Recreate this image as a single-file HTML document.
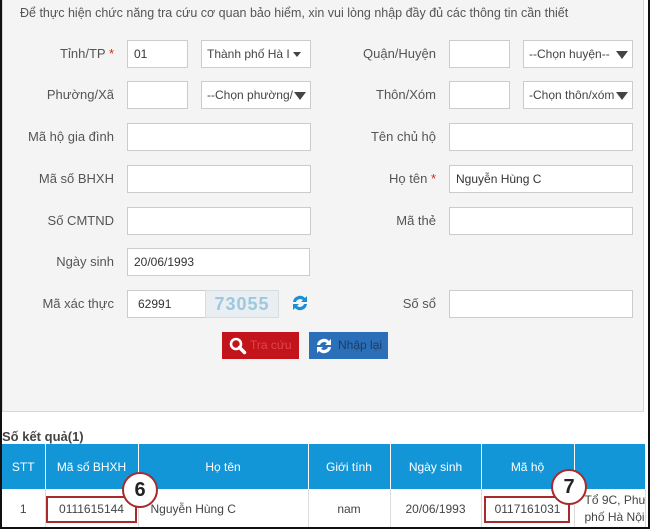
<!DOCTYPE html>
<html><head><meta charset="utf-8"><style>
*{box-sizing:border-box;margin:0;padding:0}
body{width:650px;height:529px;overflow:hidden;background:#fff;font-family:"Liberation Sans",sans-serif;font-size:13px;color:#555;position:relative}
.frame{position:absolute;left:0;top:0;width:650px;height:529px;border:2px solid #111;border-top:none;z-index:10;pointer-events:none}
.panel{position:absolute;left:2px;top:0;width:642px;height:412px;background:#f4f4f4;border:1px solid #d6d6d6;border-top:none}
.a{position:absolute}
.lbl{position:absolute;text-align:right;width:110px;font-size:13px;color:#555;line-height:28px}
.in{position:absolute;background:#fff;border:1px solid #ccc;height:28px;line-height:26px;padding-left:6px;color:#333;font-size:12px}
.sel{position:absolute;background:#fff;border:1px solid #ccc;height:28px;line-height:26px;padding-left:5px;padding-right:18px;color:#444;font-size:12px;white-space:nowrap;overflow:hidden}
.sel .ar{position:absolute;right:4px;top:10px;width:0;height:0;border-left:6px solid transparent;border-right:6px solid transparent;border-top:8px solid #444}
.req{color:#d9261c}
table{position:absolute;left:2px;top:444px;border-collapse:collapse;width:643px;font-size:12px;table-layout:fixed}
th{background:#1396d8;color:#fff;font-weight:normal;height:45px;border-right:1px solid #fff;text-align:center}
td{height:40px;border-right:1px solid #ddd;color:#444;text-align:center;vertical-align:middle;background:#fff}
.box{position:absolute;border:2px solid #a82a2a}
.circ{position:absolute;width:36px;height:36px;border-radius:50%;border:2px solid #a82a2a;background:#fff;font-weight:bold;font-size:20px;color:#222;text-align:center;line-height:32px}
</style></head><body>
<div class="panel"></div>
<div class="a" style="left:20px;top:6px;font-size:12.5px;color:#555">Để thực hiện chức năng tra cứu cơ quan bảo hiểm, xin vui lòng nhập đầy đủ các thông tin cần thiết</div>

<div class="lbl" style="left:4px;top:40px">Tỉnh/TP <span class="req">*</span></div>
<div class="in" style="left:127px;top:40px;width:61px">01</div>
<div class="sel" style="left:201px;top:40px;width:110px;padding-right:4px">Thành phố Hà I <span style="display:inline-block;border-left:4px solid transparent;border-right:4px solid transparent;border-top:5px solid #444;vertical-align:middle"></span></div>
<div class="lbl" style="left:326px;top:40px">Quận/Huyện</div>
<div class="in" style="left:449px;top:40px;width:61px"></div>
<div class="sel" style="left:523px;top:40px;width:110px">--Chọn huyện--<span class="ar"></span></div>

<div class="lbl" style="left:4px;top:81px">Phường/Xã</div>
<div class="in" style="left:127px;top:81px;width:61px"></div>
<div class="sel" style="left:201px;top:81px;width:110px">--Chọn phường/<span class="ar"></span></div>
<div class="lbl" style="left:326px;top:81px">Thôn/Xóm</div>
<div class="in" style="left:449px;top:81px;width:61px"></div>
<div class="sel" style="left:523px;top:81px;width:110px">-Chọn thôn/xóm<span class="ar"></span></div>

<div class="lbl" style="left:4px;top:123px">Mã hộ gia đình</div>
<div class="in" style="left:127px;top:123px;width:184px"></div>
<div class="lbl" style="left:326px;top:123px">Tên chủ hộ</div>
<div class="in" style="left:449px;top:123px;width:184px"></div>

<div class="lbl" style="left:4px;top:165px">Mã số BHXH</div>
<div class="in" style="left:127px;top:165px;width:184px"></div>
<div class="lbl" style="left:326px;top:165px">Họ tên <span class="req">*</span></div>
<div class="in" style="left:449px;top:165px;width:184px">Nguyễn Hùng C</div>

<div class="lbl" style="left:4px;top:207px">Số CMTND</div>
<div class="in" style="left:127px;top:207px;width:184px"></div>
<div class="lbl" style="left:326px;top:207px">Mã thẻ</div>
<div class="in" style="left:449px;top:207px;width:184px"></div>

<div class="lbl" style="left:4px;top:248px">Ngày sinh</div>
<div class="in" style="left:127px;top:248px;width:183px">20/06/1993</div>

<div class="lbl" style="left:4px;top:290px">Mã xác thực</div>
<div class="in" style="left:127px;top:290px;width:79px;padding-left:10px">62991</div>
<div class="a" style="left:205px;top:290px;width:74px;height:28px;background:#e8eef2;border:1px solid #d8dde0;color:#9ec8e0;font-weight:bold;font-size:18px;text-align:center;line-height:26px;letter-spacing:1px">73055</div>
<svg class="a" style="left:290px;top:293px" width="20" height="20" viewBox="0 0 20 20"><path d="M3 9a7 7 0 0 1 12-4l2-2v6h-6l2-2a4.5 4.5 0 0 0-7 2z" fill="#1b8fd6"/><path d="M17 11a7 7 0 0 1-12 4l-2 2v-6h6l-2 2a4.5 4.5 0 0 0 7-2z" fill="#1b8fd6"/></svg>
<div class="lbl" style="left:326px;top:290px">Số sổ</div>
<div class="in" style="left:449px;top:290px;width:184px"></div>

<div class="a" style="left:222px;top:332px;width:77px;height:27px;background:#c2141a;color:#e0464a;line-height:27px;padding-left:28px;font-size:12px;white-space:nowrap">Tra cứu</div>
<svg class="a" style="left:228px;top:336px" width="20" height="20" viewBox="0 0 20 20"><circle cx="8" cy="8" r="5" fill="none" stroke="#fff" stroke-width="2.6"/><path d="M11.5 11.5l5 5" stroke="#fff" stroke-width="3.5" stroke-linecap="round"/></svg>
<div class="a" style="left:309px;top:332px;width:79px;height:27px;background:#2a6fb8;color:#1c3c66;line-height:27px;padding-left:29px;font-size:12px;white-space:nowrap">Nhập lại</div>
<svg class="a" style="left:314px;top:336px" width="20" height="20" viewBox="0 0 20 20"><path d="M3 9a7 7 0 0 1 12-4l2-2v6h-6l2-2a4.5 4.5 0 0 0-7 2z" fill="#fff"/><path d="M17 11a7 7 0 0 1-12 4l-2 2v-6h6l-2 2a4.5 4.5 0 0 0 7-2z" fill="#fff"/></svg>

<div class="a" style="left:2px;top:429px;font-weight:bold;font-size:13px;color:#444">Số kết quả(1)</div>

<table>
<colgroup><col style="width:43px"><col style="width:93px"><col style="width:170px"><col style="width:82px"><col style="width:91px"><col style="width:93px"><col style="width:71px"></colgroup>
<tr><th>STT</th><th>Mã số BHXH</th><th>Họ tên</th><th>Giới tính</th><th>Ngày sinh</th><th>Mã hộ</th><th></th></tr>
<tr><td>1</td><td>0111615144</td><td style="text-align:left;padding-left:12px">Nguyễn Hùng C</td><td>nam</td><td>20/06/1993</td><td>0117161031</td><td style="text-align:left;padding-left:10px;line-height:17px;white-space:nowrap;overflow:hidden">Tổ 9C, Phườ<br>phố Hà Nội</td></tr>
</table>
<div class="box" style="left:46px;top:496px;width:91px;height:27px"></div>
<div class="box" style="left:484px;top:496px;width:86px;height:27px"></div>
<div class="circ" style="left:122px;top:472px">6</div>
<div class="circ" style="left:551px;top:469px">7</div>
<div class="frame"></div>
</body></html>
